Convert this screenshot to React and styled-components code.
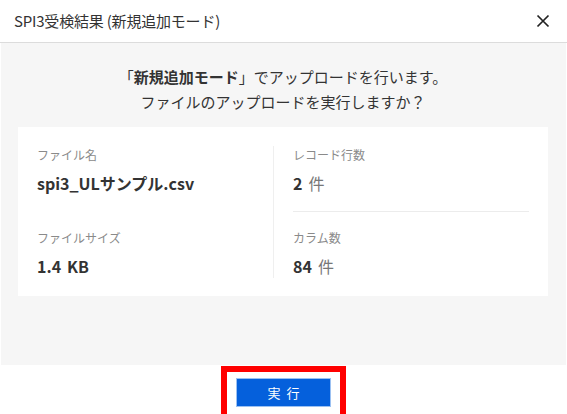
import React from "react";
import styled, { createGlobalStyle } from "styled-components";

const Global = createGlobalStyle`
  html, body { margin: 0; padding: 0; background: #fff; }
  body { font-family: "Noto Sans CJK JP", "Noto Sans", sans-serif; color: #333; }
  * { box-sizing: border-box; }
`;

const Modal = styled.div`
  width: 567px;
  height: 414px;
  display: flex;
  flex-direction: column;
  background: #fff;
  overflow: hidden;
`;

const Header = styled.div`
  height: 43px;
  flex: none;
  display: flex;
  align-items: center;
  justify-content: space-between;
  padding: 0 16px 1px 14px;
  border-bottom: 1px solid #dcdcdc;
`;

const Title = styled.h1`
  margin: 0;
  font-size: 15px;
  font-weight: 400;
  color: #333;
  letter-spacing: -0.2px;
`;

const Close = styled.button`
  border: 0;
  background: none;
  padding: 0;
  width: 16px;
  height: 16px;
  display: flex;
  align-items: center;
  justify-content: center;
  cursor: pointer;
`;

const Body = styled.div`
  flex: none;
  height: 322px;
  margin: 0 1px;
  background: #f6f6f6;
  padding: 21px 18px 0 17px;
  display: flex;
  flex-direction: column;
`;

const Message = styled.p`
  margin: 0;
  text-align: center;
  font-size: 15px;
  line-height: 25px;
  color: #333;
  strong { font-weight: 700; }
`;

const Card = styled.div`
  margin-top: 13px;
  background: #fff;
  padding: 19px 19px 18px 19px;
  display: grid;
  grid-template-columns: 236px 1fr;
`;

const Column = styled.div`
  display: flex;
  flex-direction: column;
  ${(p) => p.$right && `border-left: 1px solid #efefef; padding-left: 19px;`}
`;

const Item = styled.div`
  display: flex;
  flex-direction: column;
  gap: 7px;
  padding: ${(p) => p.$pad};
  ${(p) => p.$divider && `border-bottom: 1px solid #ececec;`}
`;

const Label = styled.div`
  font-size: 12px;
  line-height: 18px;
  color: #8a8a8a;
`;

const Value = styled.div`
  font-size: 16px;
  line-height: 24px;
  font-weight: 700;
  color: #333;
  white-space: nowrap;
`;

const Unit = styled.span`
  margin-left: 6px;
  font-weight: ${(p) => (p.$light ? 400 : 700)};
  color: ${(p) => (p.$light ? "#777" : "#333")};
`;

const Footer = styled.div`
  flex: 1;
  display: flex;
  justify-content: center;
  align-items: flex-start;
  padding-top: 1px;
`;

const Highlight = styled.div`
  border: 6px solid #ff0000;
  padding: 6px 9px 8px 9px;
  display: flex;
`;

const RunButton = styled.button`
  width: 95px;
  height: 29px;
  border: 1px solid #9cc1f2;
  background: #0560dc;
  color: #fff;
  font-family: inherit;
  font-size: 13px;
  letter-spacing: 6px;
  padding: 0 0 0 6px;
  cursor: pointer;
`;

export default function App() {
  return (
    <>
      <Global />
      <Modal>
        <Header>
          <Title>SPI3受検結果 (新規追加モード)</Title>
          <Close aria-label="close">
            <svg width="14" height="14" viewBox="0 0 14 14">
              <path d="M1.5 1.5 L12.5 12.5 M12.5 1.5 L1.5 12.5" stroke="#222" strokeWidth="1.7" fill="none" />
            </svg>
          </Close>
        </Header>
        <Body>
          <Message>
            「<strong>新規追加モード</strong>」でアップロードを行います。
            <br />
            ファイルのアップロードを実行しますか？
          </Message>
          <Card>
            <Column>
              <Item $pad="0 0 34px 0">
                <Label>ファイル名</Label>
                <Value>spi3_ULサンプル.csv</Value>
              </Item>
              <Item $pad="0">
                <Label>ファイルサイズ</Label>
                <Value>
                  1.4<Unit>KB</Unit>
                </Value>
              </Item>
            </Column>
            <Column $right>
              <Item $pad="0 0 16px 0" $divider>
                <Label>レコード行数</Label>
                <Value>
                  2<Unit $light>件</Unit>
                </Value>
              </Item>
              <Item $pad="17px 0 0 0">
                <Label>カラム数</Label>
                <Value>
                  84<Unit $light>件</Unit>
                </Value>
              </Item>
            </Column>
          </Card>
        </Body>
        <Footer>
          <Highlight>
            <RunButton>実行</RunButton>
          </Highlight>
        </Footer>
      </Modal>
    </>
  );
}
